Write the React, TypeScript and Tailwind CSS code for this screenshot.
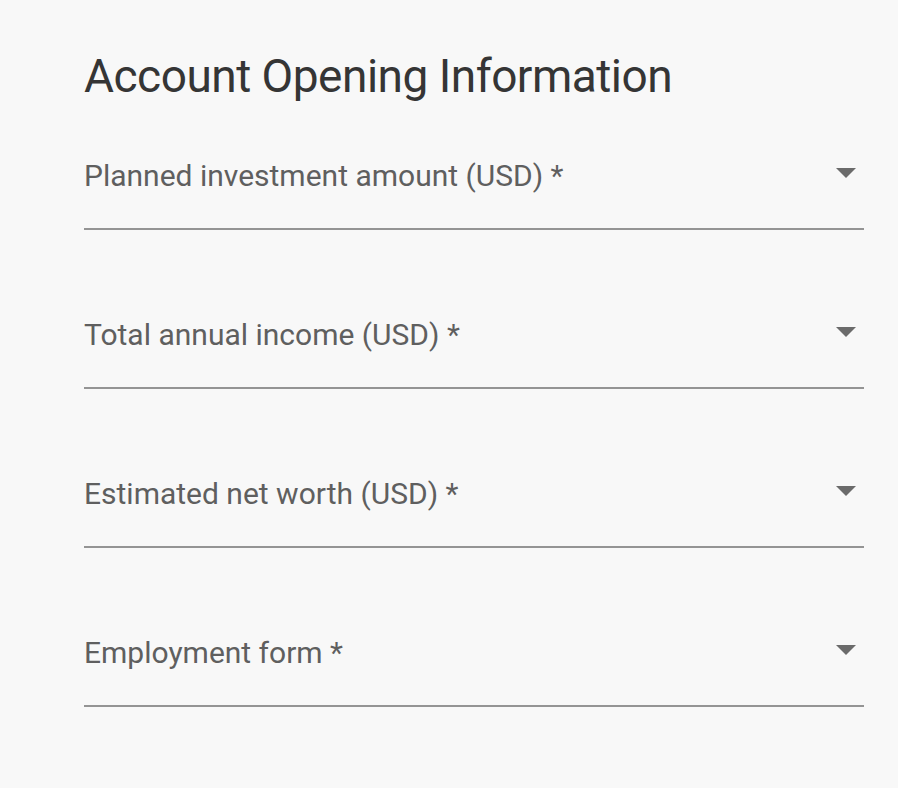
const fields = [
  "Planned investment amount (USD) *",
  "Total annual income (USD) *",
  "Estimated net worth (USD) *",
  "Employment form *",
];

const SelectField = ({ label, first }: { label: string; first?: boolean }) => {
  return (
    <div
      className={`flex items-center justify-between pb-[34px] border-b-2 border-[#949494] ${
        first ? "" : "mt-[87px]"
      }`}
    >
      <span className="text-[30px] leading-[36px] text-[#5f5f5f]">{label}</span>
      <svg width="20" height="10" viewBox="0 0 20 10" className="mr-[8px] -mt-[6px]">
        <path d="M0 0 L20 0 L10 10 Z" fill="#6b6b6b" />
      </svg>
    </div>
  );
};

export default function App() {
  return (
    <div
      className="min-h-screen w-full bg-[#f8f8f8] pl-[84px] pr-[34px] pt-[49px]"
      style={{ fontFamily: "Roboto, 'Liberation Sans', sans-serif" }}
    >
      <h1 className="text-[46px] leading-[54px] tracking-[-0.5px] text-[#353535]">
        Account Opening Information
      </h1>
      <div className="mt-[55px]">
        {fields.map((label, i) => (
          <SelectField key={label} label={label} first={i === 0} />
        ))}
      </div>
    </div>
  );
}
